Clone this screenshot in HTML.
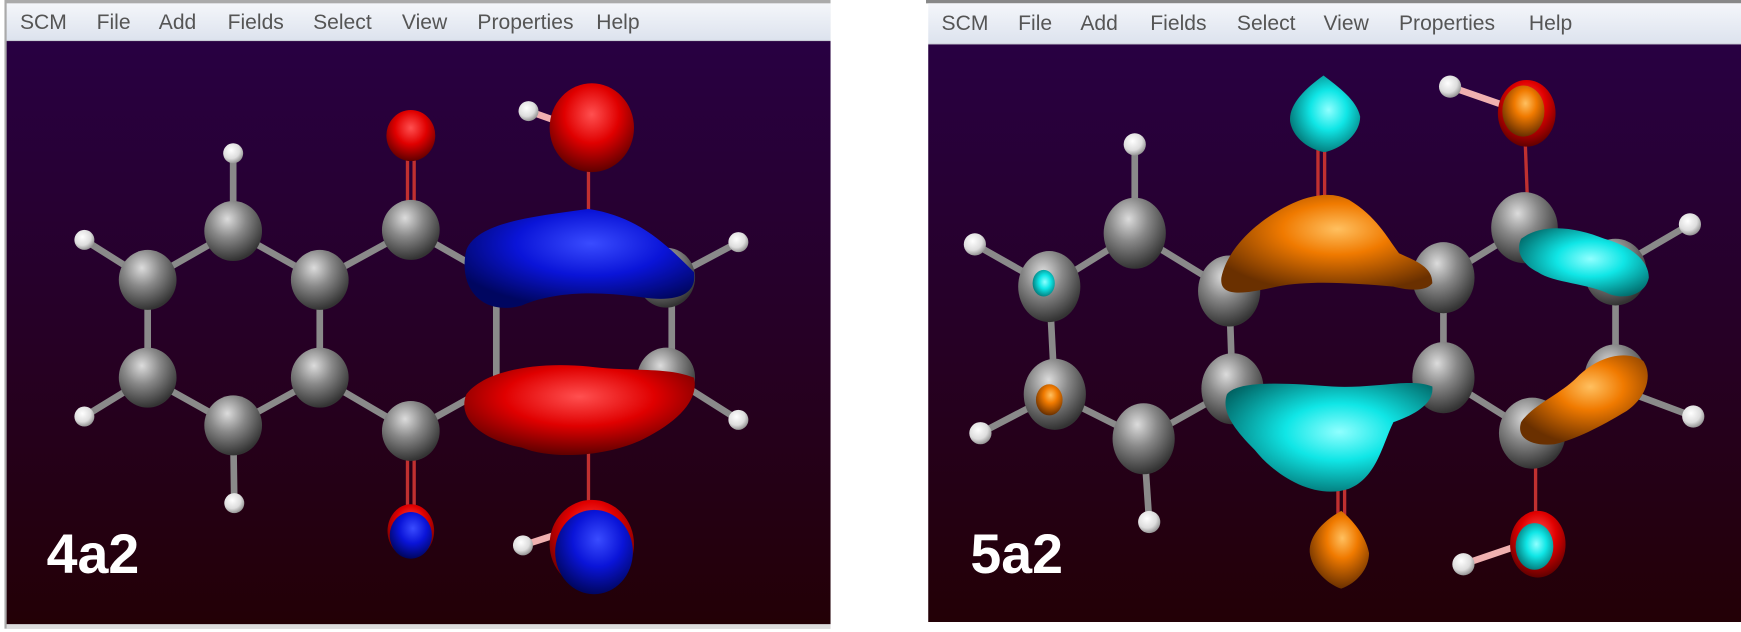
<!DOCTYPE html>
<html><head><meta charset="utf-8"><style>
html,body{margin:0;padding:0;background:#fff;width:1741px;height:632px;overflow:hidden}
svg{display:block}
</style></head><body>
<svg width="1741" height="632" viewBox="0 0 1568 569" preserveAspectRatio="none" xmlns="http://www.w3.org/2000/svg">
<defs>
<linearGradient id="bg" x1="0" y1="0" x2="0" y2="1"><stop offset="0" stop-color="#280042"/><stop offset="0.5" stop-color="#260026"/><stop offset="1" stop-color="#230006"/></linearGradient>
<linearGradient id="mb" x1="0" y1="0" x2="0" y2="1"><stop offset="0" stop-color="#f4f6fa"/><stop offset="1" stop-color="#dde3ee"/></linearGradient>
<radialGradient id="gc" cx="0.4" cy="0.3" r="0.7"><stop offset="0" stop-color="#dcdcdc"/><stop offset="0.45" stop-color="#888"/><stop offset="1" stop-color="#333"/></radialGradient>
<radialGradient id="gh" cx="0.4" cy="0.35" r="0.7"><stop offset="0" stop-color="#fff"/><stop offset="0.6" stop-color="#ddd"/><stop offset="1" stop-color="#888"/></radialGradient>
<radialGradient id="gr" cx="0.5" cy="0.35" r="0.65"><stop offset="0" stop-color="#ff5050"/><stop offset="0.5" stop-color="#e00000"/><stop offset="1" stop-color="#600000"/></radialGradient>
<radialGradient id="gb" cx="0.55" cy="0.35" r="0.65"><stop offset="0" stop-color="#3a4cff"/><stop offset="0.5" stop-color="#0a14d8"/><stop offset="1" stop-color="#000660"/></radialGradient>
<radialGradient id="go" cx="0.55" cy="0.35" r="0.65"><stop offset="0" stop-color="#ffc060"/><stop offset="0.4" stop-color="#f07a00"/><stop offset="1" stop-color="#6a3000"/></radialGradient>
<radialGradient id="gy" cx="0.55" cy="0.45" r="0.65"><stop offset="0" stop-color="#90ffff"/><stop offset="0.4" stop-color="#10e6e6"/><stop offset="1" stop-color="#006060"/></radialGradient>
</defs>
<style>
.m{font-family:"Liberation Sans",sans-serif;font-size:19px;fill:#555}
.b{stroke:#8a8a8a;stroke-width:6;stroke-linecap:round}
.r{stroke:#c03030;stroke-width:3}
.p{stroke:#f0b0b0;stroke-width:6}
.lab{font-family:"Liberation Sans",sans-serif;font-weight:bold;font-size:50px;fill:#fff}
</style>

<!-- LEFT PANEL -->
<rect x="0" y="0" width="750" height="569" fill="#fff"/>
<rect x="4" y="0" width="744" height="566" fill="#aaa"/>
<rect x="6" y="3" width="742" height="33" fill="url(#mb)"/>
<rect x="6" y="36" width="742" height="1" fill="#c8ccd6"/>
<rect x="6" y="37" width="742" height="525" fill="url(#bg)"/>
<rect x="6" y="562" width="742" height="4" fill="#ddd"/>
<g class="m"><text x="18" y="26">SCM</text><text x="87" y="26">File</text><text x="143" y="26">Add</text><text x="205" y="26">Fields</text><text x="282" y="26">Select</text><text x="362" y="26">View</text><text x="430" y="26">Properties</text><text x="537" y="26">Help</text></g>
<g>
<line class="b" x1="210" y1="138" x2="210" y2="208"/><line class="b" x1="76" y1="216" x2="133" y2="252"/><line class="b" x1="76" y1="375" x2="133" y2="340"/><line class="b" x1="211" y1="453" x2="210" y2="383"/>
<polygon points="210,208 133,252 133,340 210,383 288,340 288,252" fill="none" stroke="#8a8a8a" stroke-width="6"/>
<line class="b" x1="288" y1="252" x2="370" y2="207"/><line class="b" x1="288" y1="340" x2="370" y2="388"/>
<line class="b" x1="370" y1="207" x2="447" y2="251"/><line class="b" x1="370" y1="388" x2="447" y2="345"/>
<line class="b" x1="447" y1="251" x2="447" y2="345"/><line class="b" x1="605" y1="250" x2="605" y2="340"/>
<line class="b" x1="605" y1="250" x2="665" y2="218"/><line class="b" x1="605" y1="340" x2="665" y2="378"/>
<line class="r" x1="367" y1="130" x2="367" y2="200"/><line class="r" x1="373" y1="130" x2="373" y2="200"/>
<line class="r" x1="367" y1="395" x2="367" y2="470"/><line class="r" x1="373" y1="395" x2="373" y2="470"/>
<line class="r" x1="530" y1="120" x2="530" y2="200"/><line class="r" x1="530" y1="400" x2="530" y2="490"/>
<line class="p" x1="476" y1="100" x2="510" y2="112"/><line class="p" x1="471" y1="491" x2="505" y2="480"/>
<g fill="url(#gc)"><ellipse cx="210" cy="208" rx="26" ry="27"/><ellipse cx="133" cy="252" rx="26" ry="27"/><ellipse cx="133" cy="340" rx="26" ry="27"/><ellipse cx="210" cy="383" rx="26" ry="27"/><ellipse cx="288" cy="252" rx="26" ry="27"/><ellipse cx="288" cy="340" rx="26" ry="27"/><ellipse cx="370" cy="207" rx="26" ry="27"/><ellipse cx="370" cy="388" rx="26" ry="27"/><ellipse cx="600" cy="250" rx="26" ry="27"/><ellipse cx="600" cy="340" rx="26" ry="27"/></g>
<g fill="url(#gh)"><circle cx="210" cy="138" r="9"/><circle cx="76" cy="216" r="9"/><circle cx="76" cy="375" r="9"/><circle cx="211" cy="453" r="9"/><circle cx="665" cy="218" r="9"/><circle cx="665" cy="378" r="9"/><circle cx="476" cy="100" r="9"/><circle cx="471" cy="491" r="9"/></g>
<ellipse cx="370" cy="122" rx="22" ry="23" fill="url(#gr)"/>
<ellipse cx="370" cy="478" rx="21" ry="24" fill="url(#gr)"/><ellipse cx="370" cy="482" rx="19" ry="21" fill="url(#gb)"/>
<ellipse cx="533" cy="115" rx="38" ry="40" fill="url(#gr)"/>
<ellipse cx="533" cy="490" rx="38" ry="40" fill="url(#gr)"/><ellipse cx="535" cy="497" rx="35" ry="38" fill="url(#gb)"/>
<path d="M420,225 C430,200 480,195 530,188 C575,195 600,220 625,245 C628,265 610,272 580,268 C540,262 500,262 470,275 C435,285 412,260 420,225Z" fill="url(#gb)"/>
<path d="M420,355 C435,335 480,325 530,330 C570,335 600,330 625,340 C630,360 610,380 580,395 C550,410 500,415 470,403 C430,395 412,375 420,355Z" fill="url(#gr)"/>
</g>
<text class="lab" x="42" y="516">4a2</text>

<!-- RIGHT PANEL -->
<rect x="834" y="0" width="734" height="3" fill="#888"/>
<rect x="836" y="3" width="732" height="36" fill="url(#mb)"/>
<rect x="836" y="39" width="732" height="1" fill="#c8ccd6"/>
<rect x="836" y="40" width="732" height="520" fill="url(#bg)"/>
<g class="m"><text x="848" y="27">SCM</text><text x="917" y="27">File</text><text x="973" y="27">Add</text><text x="1036" y="27">Fields</text><text x="1114" y="27">Select</text><text x="1192" y="27">View</text><text x="1260" y="27">Properties</text><text x="1377" y="27">Help</text></g>
<g>
<line class="b" x1="1022" y1="130" x2="1022" y2="210"/><line class="b" x1="878" y1="220" x2="945" y2="258"/><line class="b" x1="883" y1="390" x2="950" y2="355"/><line class="b" x1="1035" y1="470" x2="1030" y2="395"/>
<polygon points="1022,210 945,258 950,355 1030,395 1110,350 1107,262" fill="none" stroke="#8a8a8a" stroke-width="6"/>
<line class="b" x1="1107" y1="262" x2="1195" y2="205"/><line class="b" x1="1110" y1="350" x2="1200" y2="400"/>
<line class="b" x1="1195" y1="205" x2="1300" y2="250"/><line class="b" x1="1200" y1="400" x2="1300" y2="340"/>
<line class="b" x1="1300" y1="250" x2="1373" y2="205"/><line class="b" x1="1300" y1="250" x2="1300" y2="340"/><line class="b" x1="1300" y1="340" x2="1380" y2="390"/>
<line class="b" x1="1440" y1="250" x2="1522" y2="202"/><line class="b" x1="1445" y1="345" x2="1525" y2="375"/>
<line class="b" x1="1373" y1="205" x2="1455" y2="245"/><line class="b" x1="1455" y1="245" x2="1455" y2="340"/><line class="b" x1="1455" y1="340" x2="1380" y2="390"/>
<line class="r" x1="1187" y1="110" x2="1187" y2="180"/><line class="r" x1="1193" y1="110" x2="1193" y2="180"/>
<line class="r" x1="1205" y1="420" x2="1205" y2="480"/><line class="r" x1="1211" y1="420" x2="1211" y2="480"/>
<line class="r" x1="1373" y1="110" x2="1376" y2="190"/><line class="r" x1="1383" y1="405" x2="1383" y2="480"/>
<line class="p" x1="1306" y1="78" x2="1355" y2="95"/><line class="p" x1="1318" y1="508" x2="1365" y2="492"/>
<g fill="url(#gc)"><ellipse cx="1022" cy="210" rx="28" ry="32"/><ellipse cx="945" cy="258" rx="28" ry="32"/><ellipse cx="950" cy="355" rx="28" ry="32"/><ellipse cx="1030" cy="395" rx="28" ry="32"/><ellipse cx="1107" cy="262" rx="28" ry="32"/><ellipse cx="1110" cy="350" rx="28" ry="32"/><ellipse cx="1300" cy="250" rx="28" ry="32"/><ellipse cx="1300" cy="340" rx="28" ry="32"/><ellipse cx="1373" cy="205" rx="30" ry="32"/><ellipse cx="1380" cy="390" rx="30" ry="32"/><ellipse cx="1455" cy="245" rx="28" ry="30"/><ellipse cx="1455" cy="340" rx="28" ry="30"/></g>
<g fill="url(#gh)"><circle cx="1022" cy="130" r="10"/><circle cx="878" cy="220" r="10"/><circle cx="883" cy="390" r="10"/><circle cx="1035" cy="470" r="10"/><circle cx="1522" cy="202" r="10"/><circle cx="1525" cy="375" r="10"/><circle cx="1306" cy="78" r="10"/><circle cx="1318" cy="508" r="10"/></g>
<ellipse cx="940" cy="255" rx="10" ry="12" fill="url(#gy)"/><ellipse cx="945" cy="360" rx="12" ry="14" fill="url(#go)"/>
<path d="M1192,68 C1175,80 1160,95 1162,110 C1165,125 1180,135 1193,137 C1210,133 1225,120 1225,105 C1222,90 1205,78 1192,68Z" fill="url(#gy)"/>
<path d="M1208,460 C1190,470 1177,485 1180,500 C1183,515 1198,527 1208,530 C1222,525 1233,512 1233,498 C1230,482 1218,468 1208,460Z" fill="url(#go)"/>
<ellipse cx="1375" cy="102" rx="26" ry="30" fill="url(#gr)"/><ellipse cx="1372" cy="100" rx="19" ry="23" fill="url(#go)"/>
<ellipse cx="1385" cy="490" rx="25" ry="30" fill="url(#gr)"/><ellipse cx="1382" cy="492" rx="17" ry="21" fill="url(#gy)"/>
<path d="M1100,250 C1105,225 1130,200 1160,185 C1180,175 1200,172 1215,180 C1240,195 1250,215 1260,228 C1275,235 1290,240 1290,255 C1285,262 1270,262 1255,258 C1220,255 1180,252 1150,258 C1120,265 1098,268 1100,250Z" fill="url(#go)"/>
<path d="M1105,355 C1115,342 1160,345 1200,348 C1240,350 1270,340 1290,348 C1292,365 1270,375 1255,380 C1245,400 1240,430 1215,440 C1185,450 1150,430 1130,405 C1110,385 1100,370 1105,355Z" fill="url(#gy)"/>
<path d="M1370,215 C1390,200 1420,205 1445,215 C1470,222 1485,235 1485,250 C1482,265 1465,270 1450,265 C1430,255 1400,255 1385,245 C1370,238 1365,225 1370,215Z" fill="url(#gy)"/>
<path d="M1370,380 C1380,365 1405,355 1420,340 C1440,320 1465,315 1480,325 C1490,340 1480,360 1465,370 C1440,385 1420,395 1400,400 C1380,402 1365,395 1370,380Z" fill="url(#go)"/>
</g>
<text class="lab" x="874" y="516">5a2</text>
</svg>
</body></html>
